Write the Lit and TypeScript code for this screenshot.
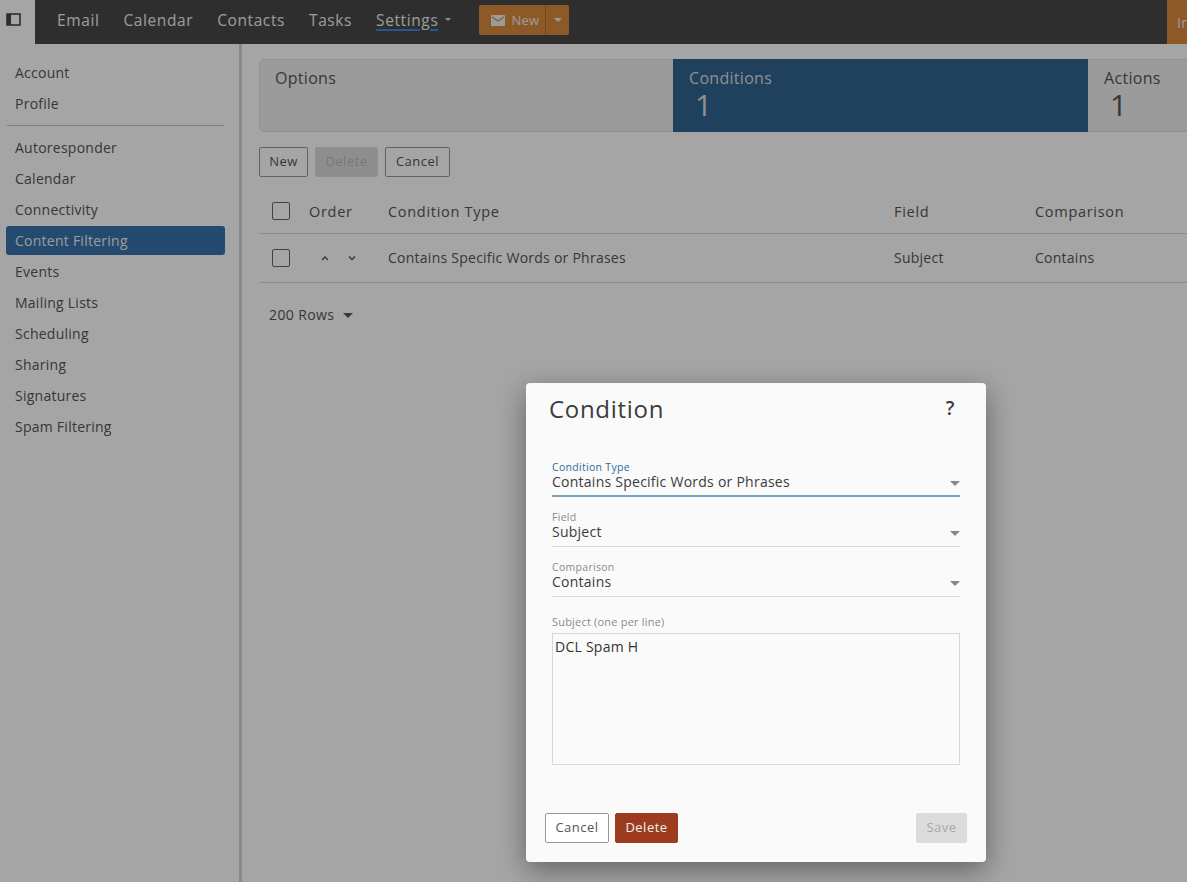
import { LitElement, html, css } from "lit";
import { customElement } from "lit/decorators.js";

const sideTop = ["Account", "Profile"];
const sideBottom = ["Autoresponder", "Calendar", "Connectivity", "Content Filtering", "Events", "Mailing Lists", "Scheduling", "Sharing", "Signatures", "Spam Filtering"];

@customElement("app-root")
export class AppRoot extends LitElement {
  static styles = css`
    :host { display: block; position: relative; width: 100%; height: 882px; overflow: hidden; background: #fdfdfd; color: #555; font-family: "Open Sans", "Noto Sans", sans-serif; font-size: 14px; letter-spacing: 0.25px; }
    .top { display: flex; height: 44px; width: 1187px; background: #484848; }
    .toggle { width: 35px; flex: none; background: #fdfdfd; display: flex; align-items: center; padding: 0 0 5px 6px; box-sizing: border-box; }
    .nav { display: flex; align-items: center; flex: 1; padding: 0 0 5px 22px; color: #eee; font-size: 15.5px; letter-spacing: 0.6px; }
    .nav a { margin-right: 24px; }
    .nav a.sel { margin-right: 7px; text-decoration: underline; text-decoration-color: #3d85d8; text-decoration-thickness: 2px; text-underline-offset: 3px; }
    .tiny { width: 0; height: 0; border-left: 3px solid transparent; border-right: 3px solid transparent; border-top: 3px solid #ddd; margin-right: 28px; }
    .newbtn { display: flex; width: 90px; height: 30px; margin-top: 1px; background: #d98a3d; border-radius: 2px; color: #eee; font-size: 13px; letter-spacing: 0.3px; }
    .newmain { width: 67px; box-sizing: border-box; padding-left: 12px; border-right: 1px solid #b06c2c; display: flex; align-items: center; gap: 6px; }
    .newcaret { flex: 1; display: flex; align-items: center; justify-content: center; }
    .newcaret i { width: 0; height: 0; border-left: 4px solid transparent; border-right: 4px solid transparent; border-top: 4px solid #eee; }
    .inbtn { width: 20px; flex: none; background: #d98a3d; color: #eee; font-size: 14px; display: flex; align-items: center; padding-left: 10px; box-sizing: border-box; overflow: hidden; }
    .body { display: flex; height: 838px; }
    .side { flex: none; box-sizing: border-box; border-right: 3px solid #d2d2d2; padding: 14px 14px 0 6px; width: 242px; }
    .side a { display: flex; align-items: center; height: 29px; margin-bottom: 2px; padding-left: 9px; border-radius: 3px; }
    .side a.on { background: #3872ac; color: #eee; }
    .side hr { border: 0; border-top: 1px solid #c4c4c4; margin: 7px 1px 7px 1px; }
    .main { flex: 1; min-width: 0; overflow: hidden; padding: 15px 0 0 17px; }
    .tabs { display: flex; width: 1246px; height: 73px; box-sizing: border-box; background: #eee; border: 1px solid #ddd; border-radius: 5px; font-size: 16px; letter-spacing: 0.3px; }
    .tab { width: 415px; box-sizing: border-box; margin-top: -1px; margin-bottom: -1px; padding: 8px 16px; line-height: 22px; color: #555; }
    .tab.lead { width: 413px; padding-left: 15px; }
    .tab b { display: block; font-weight: 400; font-size: 30px; line-height: 32px; padding-left: 6px; }
    .tab.on { background: #30648f; color: #ddd; }
    .btns { display: flex; gap: 7px; margin-top: 15px; }
    .btn { height: 30px; box-sizing: border-box; padding-bottom: 2px; display: flex; align-items: center; justify-content: center; border: 1px solid #999; border-radius: 2px; font-size: 13px; color: #555; background: #fff; letter-spacing: 0.5px; }
    .main .btn { background: transparent; }
    .main .btn.dis { background: #dbdbdb; border-color: #dbdbdb; color: #b8b8b8; }
    .row { display: grid; grid-template-columns: 37px 79px 506px 141px 200px; align-items: center; width: 1246px; box-sizing: border-box; padding-left: 13px; border-bottom: 1px solid #d9d9d9; }
    .row.h { height: 45px; margin-top: 12px; font-size: 14.5px; letter-spacing: 0.7px; }
    .row.r { height: 49px; padding-bottom: 1px; }
    .check { width: 18px; height: 18px; box-sizing: border-box; border: 1px solid #666; border-radius: 2px; }
    .order { display: flex; gap: 17px; padding-left: 11px; }
    .rows { display: flex; align-items: center; gap: 9px; margin: 22px 0 0 10px; letter-spacing: 0.4px; }
    .rows i { width: 0; height: 0; border-left: 5px solid transparent; border-right: 5px solid transparent; border-top: 5px solid #555; margin-top: 1px; }
    .overlay { position: absolute; inset: 0; background: rgba(0,0,0,0.35); }
    .modal { position: absolute; left: 526px; top: 383px; width: 460px; height: 479px; box-sizing: border-box; background: #fafafa; border-radius: 4px; box-shadow: 0 8px 28px rgba(0,0,0,0.4); padding: 0 26px 19px; display: flex; flex-direction: column; color: #3c3c3c; }
    .head { display: flex; justify-content: space-between; align-items: center; height: 50px; margin-left: -3px; font-size: 24px; letter-spacing: 0.7px; }
    .head span:last-child { font-size: 19px; font-weight: 600; margin-right: 5px; margin-top: -1px; }
    .field { position: relative; height: 43px; margin-bottom: 7px; box-sizing: border-box; border-bottom: 1px solid #d8d8d8; font-size: 14px; line-height: 15px; }
    .field.first { margin-top: 21px; }
    .field.act { border-bottom: 2px solid #7aa6bd; }
    .label { font-size: 10.5px; line-height: 14px; color: #8a8a8a; letter-spacing: 0.3px; padding-top: 6px; }
    .field.act .label { color: #2c6a9c; }
    .field i { position: absolute; right: 0; top: 27px; width: 0; height: 0; border-left: 5px solid transparent; border-right: 5px solid transparent; border-top: 5px solid #888; }
    .sublabel { font-size: 11px; color: #8a8a8a; letter-spacing: 0.2px; margin-top: 10px; line-height: 15px; }
    .area { height: 132px; box-sizing: border-box; margin-top: 4px; border: 1px solid #d8d8d8; padding: 4px 2px; line-height: 17px; color: #333; }
    .foot { display: flex; gap: 6px; margin: auto -7px 0 -7px; }
    .foot .del { background: #9c3b1e; border-color: #9c3b1e; color: #f2f2f2; }
    .foot .save { margin-left: auto; background: #dcdcdc; border-color: #dcdcdc; color: #a8a8a8; }
  `;

  render() {
    return html`
      <div class="top">
        <div class="toggle">
          <svg width="15" height="13" viewBox="0 0 15 13"><rect x="1" y="1" width="13" height="11" fill="#fff" stroke="#484848" stroke-width="1.6"/><rect x="1" y="1" width="4" height="11" fill="#484848"/></svg>
        </div>
        <div class="nav">
          <a>Email</a><a>Calendar</a><a>Contacts</a><a>Tasks</a><a class="sel">Settings</a><span class="tiny"></span>
          <div class="newbtn">
            <div class="newmain">
              <svg width="14" height="11" viewBox="0 0 14 11"><rect width="14" height="11" rx="1" fill="#eee"/><path d="M1 2l6 4 6-4" fill="none" stroke="#d98a3d" stroke-width="1.2"/></svg>
              New
            </div>
            <div class="newcaret"><i></i></div>
          </div>
        </div>
        <div class="inbtn">In</div>
      </div>
      <div class="body">
        <div class="side">
          ${sideTop.map((s) => html`<a>${s}</a>`)}
          <hr />
          ${sideBottom.map((s) => html`<a class=${s === "Content Filtering" ? "on" : ""}>${s}</a>`)}
        </div>
        <div class="main">
          <div class="tabs">
            <div class="tab lead">Options</div>
            <div class="tab on">Conditions<b>1</b></div>
            <div class="tab">Actions<b>1</b></div>
          </div>
          <div class="btns">
            <div class="btn" style="width:49px">New</div>
            <div class="btn dis" style="width:63px">Delete</div>
            <div class="btn" style="width:65px">Cancel</div>
          </div>
          <div class="row h">
            <div class="check"></div><div>Order</div><div>Condition Type</div><div>Field</div><div>Comparison</div>
          </div>
          <div class="row r">
            <div class="check"></div>
            <div class="order">
              <svg width="10" height="6" viewBox="0 0 10 6"><path d="M2 5l3-3 3 3" fill="none" stroke="#555" stroke-width="1.3"/></svg>
              <svg width="10" height="6" viewBox="0 0 10 6"><path d="M2 1.5l3 3 3-3" fill="none" stroke="#555" stroke-width="1.3"/></svg>
            </div>
            <div>Contains Specific Words or Phrases</div><div>Subject</div><div>Contains</div>
          </div>
          <div class="rows">200 Rows <i></i></div>
        </div>
      </div>
      <div class="overlay"></div>
      <div class="modal">
        <div class="head"><span>Condition</span><span>?</span></div>
        <div class="field act first"><div class="label">Condition Type</div>Contains Specific Words or Phrases<i></i></div>
        <div class="field"><div class="label">Field</div>Subject<i></i></div>
        <div class="field"><div class="label">Comparison</div>Contains<i></i></div>
        <div class="sublabel">Subject (one per line)</div>
        <div class="area">DCL Spam H</div>
        <div class="foot">
          <div class="btn" style="width:64px">Cancel</div>
          <div class="btn del" style="width:63px">Delete</div>
          <div class="btn save" style="width:51px">Save</div>
        </div>
      </div>
    `;
  }
}
